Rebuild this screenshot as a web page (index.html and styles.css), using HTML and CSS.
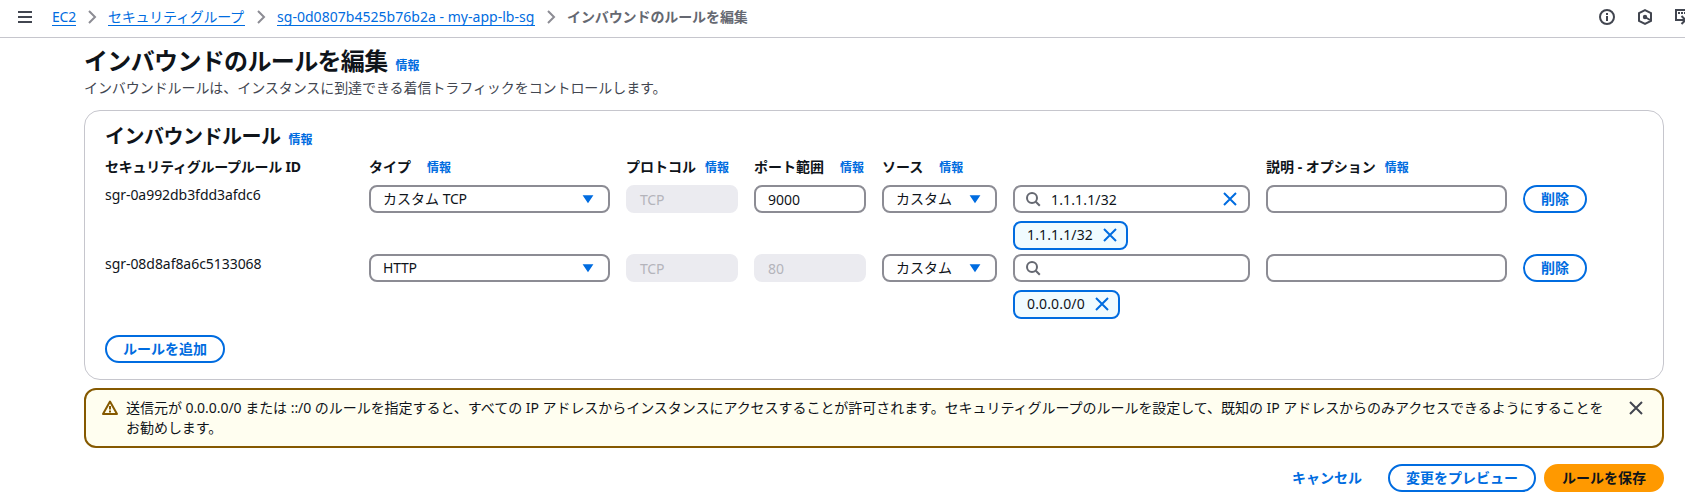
FILE: index.html
```
<!DOCTYPE html>
<html lang="ja">
<head>
<meta charset="utf-8">
<title>インバウンドのルールを編集</title>
<link rel="stylesheet" href="styles.css">
</head>
<body>
<svg class="defs" width="0" height="0" aria-hidden="true">
  <symbol id="chevron" viewBox="0 0 16 16"><path d="m5 2 6 6-6 6" fill="none" stroke="currentColor" stroke-width="2"/></symbol>
  <symbol id="close" viewBox="0 0 16 16"><path d="m2 2 12 12M14 2 2 14" fill="none" stroke="currentColor" stroke-width="2"/></symbol>
  <symbol id="search" viewBox="0 0 16 16"><circle cx="7" cy="7" r="5" fill="none" stroke="currentColor" stroke-width="2"/><path d="m10.8 10.8 4 4" fill="none" stroke="currentColor" stroke-width="2"/></symbol>
  <symbol id="caret" viewBox="0 0 16 16"><path d="M4 5h8l-4 6z" fill="currentColor" stroke="currentColor" stroke-width="1.500"/></symbol>
</svg>
<header class="topbar">
  <svg class="icon menu" viewBox="0 0 16 16"><path d="M1 3h14M1 8h14M1 13h14" fill="none" stroke="currentColor" stroke-width="2"/></svg>
  <nav class="crumbs">
    <a class="c1 lat">EC2</a><svg class="sep"><use href="#chevron"/></svg>
    <a class="c2">セキュリティグループ</a><svg class="sep"><use href="#chevron"/></svg>
    <a class="c3">sg-0d0807b4525b76b2a - my-app-lb-sg</a><svg class="sep"><use href="#chevron"/></svg>
    <span class="current">インバウンドのルールを編集</span>
  </nav>
  <div class="tools">
    <svg class="icon" viewBox="0 0 16 16"><circle cx="8" cy="8" r="7" fill="none" stroke="currentColor" stroke-width="2"/><path d="M8 7v5M8 4v2" stroke="currentColor" stroke-width="2"/></svg>
    <svg class="icon" viewBox="0 0 16 16"><path d="m8 1.200 6 3v7.600l-6 3-6-3V4.200z" fill="none" stroke="currentColor" stroke-width="2"/><circle cx="8" cy="8" r="2.200" fill="currentColor"/><path d="m8 8 5 3" stroke="currentColor" stroke-width="2"/></svg>
    <svg class="icon" viewBox="0 0 16 16"><path d="M5 11H1V1h14v5" fill="none" stroke="currentColor" stroke-width="2"/><path d="M3 4h2M6 4h2M9 4h2" stroke="currentColor" stroke-width="2"/><path d="M4 11h6M6.500 7l4 4-4 4" fill="none" stroke="currentColor" stroke-width="2"/></svg>
  </div>
</header>
<main class="page">
  <div class="title main-title"><h1>インバウンドのルールを編集</h1><a class="info">情報</a></div>
  <p class="desc">インバウンドルールは、インスタンスに到達できる着信トラフィックをコントロールします。</p>
  <section class="card">
    <div class="title card-title"><h2>インバウンドルール</h2><a class="info">情報</a></div>
    <div class="rule heads">
      <div class="head"><b class="tight">セキュリティグループルール ID</b></div>
      <div class="head wide"><b>タイプ</b><a class="info">情報</a></div>
      <div class="head"><b>プロトコル</b><a class="info">情報</a></div>
      <div class="head wide"><b>ポート範囲</b><a class="info">情報</a></div>
      <div class="head wide source"><b>ソース</b><a class="info">情報</a></div>
      <div class="head"><b>説明 - オプション</b><a class="info">情報</a></div>
    </div>
    <div class="rule">
      <div class="id">sgr-0a992db3fdd3afdc6</div>
      <div class="field"><span>カスタム <span class="lat">TCP</span></span><svg class="caret"><use href="#caret"/></svg></div>
      <div class="field disabled lat">TCP</div>
      <div class="field typed">9000</div>
      <div class="field"><span>カスタム</span><svg class="caret"><use href="#caret"/></svg></div>
      <div>
        <div class="field find"><svg class="mag"><use href="#search"/></svg><span class="query ip">1.1.1.1/32</span><svg class="x"><use href="#close"/></svg></div>
        <div class="chip chip-long"><span class="ip">1.1.1.1/32</span><svg class="x"><use href="#close"/></svg></div>
      </div>
      <div class="field"></div>
      <button class="btn">削除</button>
    </div>
    <div class="rule">
      <div class="id">sgr-08d8af8a6c5133068</div>
      <div class="field"><span class="lat">HTTP</span><svg class="caret"><use href="#caret"/></svg></div>
      <div class="field disabled lat">TCP</div>
      <div class="field disabled">80</div>
      <div class="field"><span>カスタム</span><svg class="caret"><use href="#caret"/></svg></div>
      <div>
        <div class="field find"><svg class="mag"><use href="#search"/></svg></div>
        <div class="chip"><span class="ip">0.0.0.0/0</span><svg class="x"><use href="#close"/></svg></div>
      </div>
      <div class="field"></div>
      <button class="btn">削除</button>
    </div>
    <button class="btn add">ルールを追加</button>
  </section>
  <section class="alert">
    <svg class="icon warn" viewBox="0 0 16 16"><path d="M8 1.500 15 14H1z" fill="none" stroke="currentColor" stroke-width="2" stroke-linejoin="round"/><path d="M8 6v3.500M8 10.500v2" stroke="currentColor" stroke-width="2"/></svg>
    <p>送信元が 0.0.0.0/0 または ::/0 のルールを指定すると、すべての IP アドレスからインスタンスにアクセスすることが許可されます。セキュリティグループのルールを設定して、既知の IP アドレスからのみアクセスできるようにすることを<br>お勧めします。</p>
    <svg class="icon dismiss"><use href="#close"/></svg>
  </section>
  <footer class="actions">
    <button class="link">キャンセル</button>
    <button class="btn preview">変更をプレビュー</button>
    <button class="btn primary">ルールを保存</button>
  </footer>
</main>
</body>
</html>
```
FILE: styles.css
```
* { box-sizing: border-box; }
body {
  margin: 0;
  height: 499px;
  overflow: hidden;
  background: #fff;
  color: #0f141a;
  font: 14px/20px "Noto Sans", "Noto Sans CJK JP", sans-serif;
}
h1, h2, p { margin: 0; }
svg { flex: none; }
.defs { position: absolute; }
.icon { width: 16px; height: 16px; }
.lat { letter-spacing: -0.2px; }
.ip { letter-spacing: 0.15px; }
.id { letter-spacing: -0.05px; }
.tight { letter-spacing: -0.25px; }
button { font: inherit; padding: 0; background: none; border: 0; }

.topbar {
  display: flex;
  align-items: center;
  height: 38px;
  padding: 0 0 4px 17px;
  border-bottom: 1px solid #c6c6cd;
  color: #424650;
  overflow: hidden;
}
.crumbs { display: flex; align-items: center; margin-left: 19px; white-space: nowrap; }
.crumbs a { color: #006ce0; height: 19px; line-height: 20px; border-bottom: 1px solid #006ce0; }
.sep { width: 16px; height: 16px; margin: 0 8px; color: #8c8c94; }
.c1 { width: 24px; }
.c2 { width: 137px; letter-spacing: -0.25px; }
.c3 { width: 258px; letter-spacing: 0.03px; }
.current { color: #656871; font-weight: 700; line-height: 18px; letter-spacing: -0.1px; }
.tools { display: flex; gap: 22px; margin: 0 -6px 0 auto; }

.page { padding: 8px 21px 0 84px; }
.title { display: flex; align-items: baseline; gap: 8px; }
.main-title { height: 30px; }
.card-title { height: 24px; }
h1 { font-size: 24px; line-height: 30px; letter-spacing: -0.65px; }
h2 { font-size: 20px; line-height: 26px; letter-spacing: -0.5px; }
.info { color: #006ce0; font-size: 12px; font-weight: 700; }
.desc { color: #424650; height: 34px; padding-top: 2px; letter-spacing: -0.07px; }

.card {
  width: 1580px;
  height: 270px;
  padding: 13px 20px 0;
  border: 1px solid #c6c6cd;
  border-radius: 16px;
}
.rule {
  display: grid;
  grid-template-columns: 248px 241px 112px 112px 115px 237px 241px 64px;
  column-gap: 16px;
  height: 69px;
  align-items: start;
}
.heads { height: 37px; padding-top: 9px; }
.head { display: flex; align-items: baseline; gap: 9px; white-space: nowrap; line-height: 20px; }
.wide { gap: 16px; }
.source { grid-column: span 2; }
.field {
  display: flex;
  align-items: center;
  justify-content: space-between;
  height: 28px;
  padding: 0 12px 1px;
  border: 2px solid #8c8c94;
  border-radius: 8px;
}
.typed { padding-top: 2px; padding-bottom: 0; }
.disabled { background: #ebebf0; border-color: #ebebf0; color: #b4b4bb; padding-top: 2px; padding-bottom: 0; }
.caret { width: 16px; height: 16px; color: #006ce0; }
.find { padding: 0 10px; justify-content: flex-start; }
.find .query { margin: 2px auto 0 10px; }
.mag { width: 16px; height: 16px; color: #656871; }
.x { width: 16px; height: 16px; color: #006ce0; }
.chip {
  display: flex;
  align-items: center;
  justify-content: space-between;
  width: 107px;
  height: 29px;
  margin-top: 8px;
  padding: 0 8px 1px 12px;
  border: 2px solid #006ce0;
  border-radius: 8px;
  background: #f0fbff;
}
.chip-long { width: 115px; }
.btn {
  height: 28px;
  border: 2px solid #006ce0;
  border-radius: 14px;
  color: #006ce0;
  font-weight: 700;
  line-height: 22px;
}
.add { width: 120px; margin-top: 12px; }

.alert {
  display: flex;
  width: 1580px;
  height: 60px;
  margin-top: 8px;
  padding: 8px 18px 0 16px;
  border: 2px solid #855900;
  border-radius: 12px;
  background: #fffef0;
  white-space: nowrap;
}
.alert p { margin-left: 8px; flex: 1; letter-spacing: -0.04px; }
.warn { margin-top: 2px; color: #855900; }
.dismiss { margin-top: 2px; color: #424650; }

.actions { display: flex; justify-content: flex-end; align-items: center; gap: 8px; width: 1580px; margin-top: 16px; }
.link { color: #006ce0; font-weight: 700; margin-right: 18px; }
.preview { width: 148px; }
.primary { width: 120px; background: #ff9900; border-color: #ff9900; color: #0f141a; }
```
